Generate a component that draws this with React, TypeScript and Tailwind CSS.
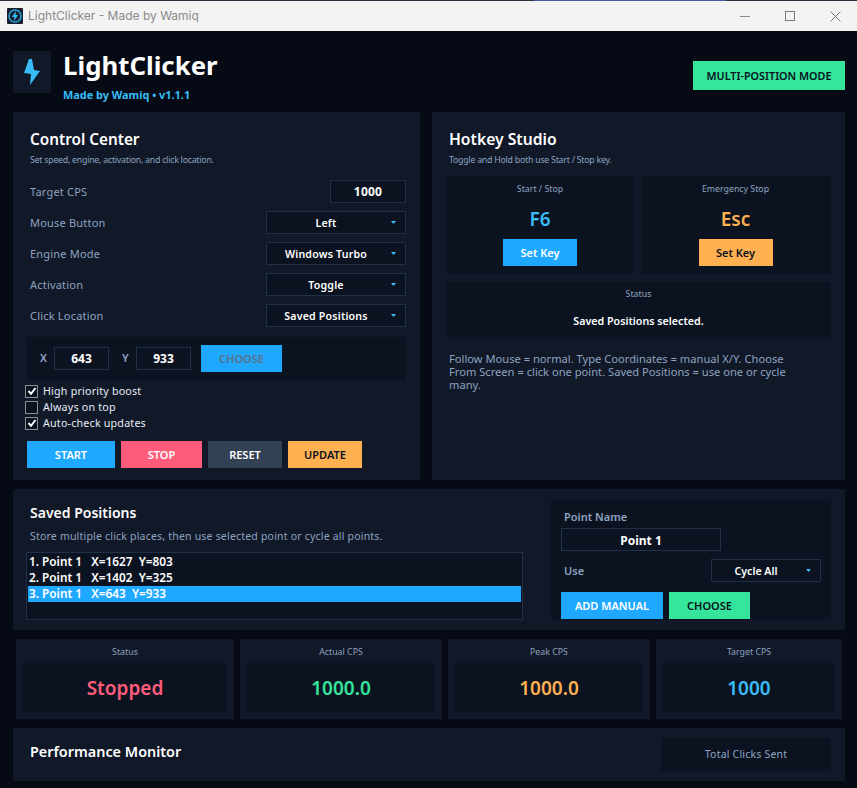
import React from "react";

const Chevron = () => (
  <svg width="5" height="3" viewBox="0 0 5 3" className="absolute right-[9px] top-[9px]">
    <polygon points="0,0 5,0 2.5,3" fill="#38bdf8" />
  </svg>
);

const Select = ({ text, w, pr = 0 }: { text: string; w: string; pr?: number }) => (
  <div className={`relative ${w} h-[23px] pt-[2px] border border-[#1f3047] bg-[#0b1220] flex items-center justify-center text-[10.6px] font-semibold text-white`}>
    <span style={{ paddingRight: pr }}>{text}</span>
    <Chevron />
  </div>
);

const Row = ({ label, children }: { label: string; children: React.ReactNode }) => (
  <div className="flex items-center justify-between h-[23px] text-[11px] text-[#8ea3c0] tracking-[0.2px]">
    <span className="pt-px">{label}</span>
    {children}
  </div>
);

const Check = ({ on, label }: { on: boolean; label: string }) => (
  <div className="flex items-center h-[16px] gap-[5px] text-[10.7px] text-[#e6edf7] tracking-[0.2px]">
    <div className="w-[13px] h-[13px] border border-[#8a8f98] bg-[#0b1220] flex items-center justify-center">
      {on && (
        <svg width="10" height="10" viewBox="0 0 10 10">
          <path d="M1.5 5 L4 7.8 L8.5 2" stroke="#fff" strokeWidth="2" fill="none" />
        </svg>
      )}
    </div>
    <span>{label}</span>
  </div>
);

const Btn = ({ w, bg, color, children }: { w: string; bg: string; color: string; children: React.ReactNode }) => (
  <div className={`${w} ${bg} ${color} h-[27px] pt-px flex items-center justify-center text-[11px] font-semibold`}>{children}</div>
);

const Stat = ({ w, label, value, color }: { w: string; label: string; value: string; color: string }) => (
  <div className={`${w} h-[80px] bg-[#111827] px-[7px] pt-[6px] flex flex-col`}>
    <div className="h-[18px] text-center text-[8.8px] leading-[14px] text-[#8ea3c0]">{label}</div>
    <div className={`h-[49px] pt-[2px] bg-[#0c1320] flex items-center justify-center text-[19px] font-semibold ${color}`}>{value}</div>
  </div>
);

const HotkeyCard = ({ w, label, value, color, btn, btnColor }: { w: string; label: string; value: string; color: string; btn: string; btnColor: string }) => (
  <div className={`${w} h-[98px] bg-[#0c1320] flex flex-col items-center pt-[6px]`}>
    <div className="text-[8.8px] leading-[14px] text-[#8ea3c0]">{label}</div>
    <div className={`mt-[7px] h-[32px] leading-[32px] text-[19px] font-semibold ${color}`}>{value}</div>
    <div className="mt-[4px]">
      <Btn w="w-[74px]" bg={btn} color={btnColor}>Set Key</Btn>
    </div>
  </div>
);

export default function App() {
  return (
    <div className="w-[857px] h-[788px] overflow-hidden flex flex-col bg-[#050a14] font-['Noto_Sans','Open_Sans',sans-serif]">
      {/* Title bar */}
      <div className="h-[31px] shrink-0 bg-[#f3f3f3] flex flex-col font-['Inter','Noto_Sans',sans-serif]">
        <div className="h-px shrink-0 bg-[#2a3242] pl-[534px]">
          <div className="w-[192px] h-px bg-[#3f5aa8]" />
        </div>
        <div className="flex-1 flex items-center pl-[7px]">
          <svg width="16" height="16" viewBox="0 0 16 16">
            <rect width="16" height="16" rx="1" fill="#17222f" />
            <circle cx="8" cy="8" r="6" fill="none" stroke="#2a9fd8" strokeWidth="1.5" />
            <polygon points="9,3 5,9 7.5,9 7,13 11,7 8.5,7" fill="#38bdf8" />
          </svg>
          <span className="ml-[5px] text-[12px] text-[#8a8a8a]">LightClicker - Made by Wamiq</span>
          <div className="ml-auto flex items-center gap-[35px] pr-[16px]">
            <div className="w-[10px] h-px bg-[#8a8a8a]" />
            <div className="w-[10px] h-[10px] border border-[#7a7a7a]" />
            <svg width="11" height="11" viewBox="0 0 11 11">
              <path d="M0.5 0.5 L10.5 10.5 M10.5 0.5 L0.5 10.5" stroke="#7a7a7a" strokeWidth="1" />
            </svg>
          </div>
        </div>
      </div>

      <div className="flex-1 pl-[13px] pr-[12px] flex flex-col">
        {/* Header */}
        <div className="h-[81px] shrink-0 flex items-start">
          <div className="mt-[20px] w-[38px] h-[42px] bg-[#111827] flex items-center justify-center">
            <svg width="16" height="26" viewBox="0 0 16 26">
              <polygon points="5,0 8,0 10,11 16,12 6,26 7,15 0,14" fill="#38bdf8" />
            </svg>
          </div>
          <div className="ml-[12px] mt-[15px]">
            <div className="text-[25.8px] leading-[38px] font-bold text-white">LightClicker</div>
            <div className="mt-[3px] text-[10.9px] leading-[16px] font-bold text-[#38bdf8]">Made by Wamiq • v1.1.1</div>
          </div>
          <div className="ml-auto mt-[30px] w-[152px] h-[29px] pt-[2px] bg-[#34e59b] text-[#06121c] flex items-center justify-center text-[10.8px] font-semibold">
            MULTI-POSITION MODE
          </div>
        </div>

        {/* Top panels */}
        <div className="flex gap-[12px] h-[368px] shrink-0">
          <div className="w-[407px] bg-[#111827] pl-[14px] pr-[14px] flex flex-col">
            <div className="pl-[3px] mt-[17px] text-[15.3px] leading-[21px] font-semibold text-white">Control Center</div>
            <div className="pl-[3px] mt-[4px] text-[8.8px] tracking-[-0.25px] leading-[13px] text-[#8ea3c0]">Set speed, engine, activation, and click location.</div>
            <div className="pl-[3px] mt-[13px] flex flex-col gap-[8px]">
              <Row label="Target CPS">
                <div className="w-[76px] h-[23px] pt-px border border-[#1f3047] bg-[#0b1220] flex items-center justify-center text-[12px] font-bold text-white">1000</div>
              </Row>
              <Row label="Mouse Button"><Select text="Left" w="w-[140px]" pr={20} /></Row>
              <Row label="Engine Mode"><Select text="Windows Turbo" w="w-[140px]" pr={20} /></Row>
              <Row label="Activation"><Select text="Toggle" w="w-[140px]" pr={20} /></Row>
              <Row label="Click Location"><Select text="Saved Positions" w="w-[140px]" pr={20} /></Row>
            </div>
            <div className="mt-[10px] h-[43px] bg-[#0c1320] flex items-center pl-[13px] text-[11px] font-semibold text-[#8ea3c0]">
              <span className="w-[14px]">X</span>
              <div className="w-[55px] h-[23px] pt-px border border-[#1f3047] bg-[#0b1220] flex items-center justify-center text-[12px] font-bold text-white">643</div>
              <span className="ml-[13px] w-[14px]">Y</span>
              <div className="w-[55px] h-[23px] pt-px border border-[#1f3047] bg-[#0b1220] flex items-center justify-center text-[12px] font-bold text-white">933</div>
              <div className="ml-[10px]">
                <Btn w="w-[81px]" bg="bg-[#1fa8ff]" color="text-[#5c6f83]">CHOOSE</Btn>
              </div>
            </div>
            <div className="mt-[3px] -ml-[2px] flex flex-col">
              <Check on label="High priority boost" />
              <Check on={false} label="Always on top" />
              <Check on label="Auto-check updates" />
            </div>
            <div className="mt-[10px] flex gap-[6px]">
              <Btn w="w-[88px]" bg="bg-[#1fa8ff]" color="text-white">START</Btn>
              <Btn w="w-[81px]" bg="bg-[#ff5c7c]" color="text-white">STOP</Btn>
              <Btn w="w-[74px]" bg="bg-[#334155]" color="text-white">RESET</Btn>
              <Btn w="w-[74px]" bg="bg-[#ffb050]" color="text-[#0b1220]">UPDATE</Btn>
            </div>
          </div>

          <div className="w-[413px] bg-[#111827] pl-[14px] pr-[14px] flex flex-col">
            <div className="pl-[3px] mt-[17px] text-[15.7px] leading-[21px] font-semibold text-white">Hotkey Studio</div>
            <div className="pl-[3px] mt-[4px] text-[8.8px] tracking-[-0.25px] leading-[13px] text-[#8ea3c0]">Toggle and Hold both use Start / Stop key.</div>
            <div className="mt-[9px] flex gap-[8px]">
              <HotkeyCard w="w-[188px]" label="Start / Stop" value="F6" color="text-[#38bdf8]" btn="bg-[#1fa8ff]" btnColor="text-white" />
              <HotkeyCard w="w-[189px] pr-[2px]" label="Emergency Stop" value="Esc" color="text-[#ffb050]" btn="bg-[#ffb050]" btnColor="text-[#0b1220]" />
            </div>
            <div className="mt-[8px] h-[55px] bg-[#0c1320] flex flex-col items-center pt-[5px]">
              <div className="text-[8.8px] leading-[14px] text-[#8ea3c0]">Status</div>
              <div className="mt-[12px] text-[10.7px] leading-[16px] font-semibold text-white">Saved Positions selected.</div>
            </div>
            <div className="pl-[3px] mt-[15px] w-[350px] text-[11.15px] leading-[13px] text-[#8ea3c0]">
              Follow Mouse = normal. Type Coordinates = manual X/Y. Choose From Screen = click one point. Saved Positions = use one or cycle many.
            </div>
          </div>
        </div>

        {/* Saved positions */}
        <div className="mt-[9px] h-[141px] shrink-0 bg-[#111827] flex pt-[10px] pl-[13px] pr-[14px]">
          <div className="w-[497px] flex flex-col">
            <div className="pl-[4px] mt-[4px] text-[14px] leading-[20px] font-semibold text-white">Saved Positions</div>
            <div className="pl-[4px] mt-[6px] text-[10.5px] leading-[15px] text-[#8ea3c0] tracking-[0.2px]">Store multiple click places, then use selected point or cycle all points.</div>
            <div className="mt-[8px] h-[68px] border border-[#1f3047] bg-[#0c1320] p-px text-[11.8px] leading-[15px] font-semibold text-white whitespace-pre">
              <div className="h-[16px] pl-px">1. Point 1   X=1627  Y=803</div>
              <div className="h-[16px] pl-px">2. Point 1   X=1402  Y=325</div>
              <div className="h-[16px] pl-px bg-[#1fa8ff]">3. Point 1   X=643  Y=933</div>
            </div>
          </div>
          <div className="ml-auto w-[280px] h-[121px] bg-[#0c1320] pl-[10px] flex flex-col">
            <div className="pl-[3px] mt-[11px] text-[11px] leading-[14px] font-semibold text-[#8ea3c0]">Point Name</div>
            <div className="mt-[4px] w-[160px] h-[23px] pt-[2px] border border-[#1f3047] bg-[#0b1220] flex items-center justify-center text-[12px] font-bold text-white">Point 1</div>
            <div className="mt-[8px] flex items-center justify-between w-[260px] text-[11px] font-semibold text-[#8ea3c0]">
              <span className="pl-[3px] pt-px">Use</span>
              <Select text="Cycle All" w="w-[110px]" pr={20} />
            </div>
            <div className="mt-[10px] flex gap-[6px]">
              <Btn w="w-[102px]" bg="bg-[#1fa8ff]" color="text-white">ADD MANUAL</Btn>
              <Btn w="w-[81px]" bg="bg-[#34e59b]" color="text-[#06121c]">CHOOSE</Btn>
            </div>
          </div>
        </div>

        {/* Stats */}
        <div className="mt-[9px] mx-[3px] flex gap-[6px] shrink-0">
          <Stat w="w-[218px]" label="Status" value="Stopped" color="text-[#ff5c7c]" />
          <Stat w="w-[202px]" label="Actual CPS" value="1000.0" color="text-[#34e59b]" />
          <Stat w="w-[202px]" label="Peak CPS" value="1000.0" color="text-[#ffb050]" />
          <Stat w="w-[186px]" label="Target CPS" value="1000" color="text-[#38bdf8]" />
        </div>

        {/* Performance */}
        <div className="mt-[9px] h-[53px] shrink-0 bg-[#111827] flex items-start pl-[17px] pr-[14px]">
          <div className="mt-[14px] text-[14.4px] leading-[20px] font-semibold text-white">Performance Monitor</div>
          <div className="ml-auto mt-[10px] w-[170px] h-[33px] pt-px bg-[#0c1320] flex items-center justify-center text-[10.5px] text-[#8ea3c0] tracking-[0.2px]">Total Clicks Sent</div>
        </div>
      </div>
    </div>
  );
}
